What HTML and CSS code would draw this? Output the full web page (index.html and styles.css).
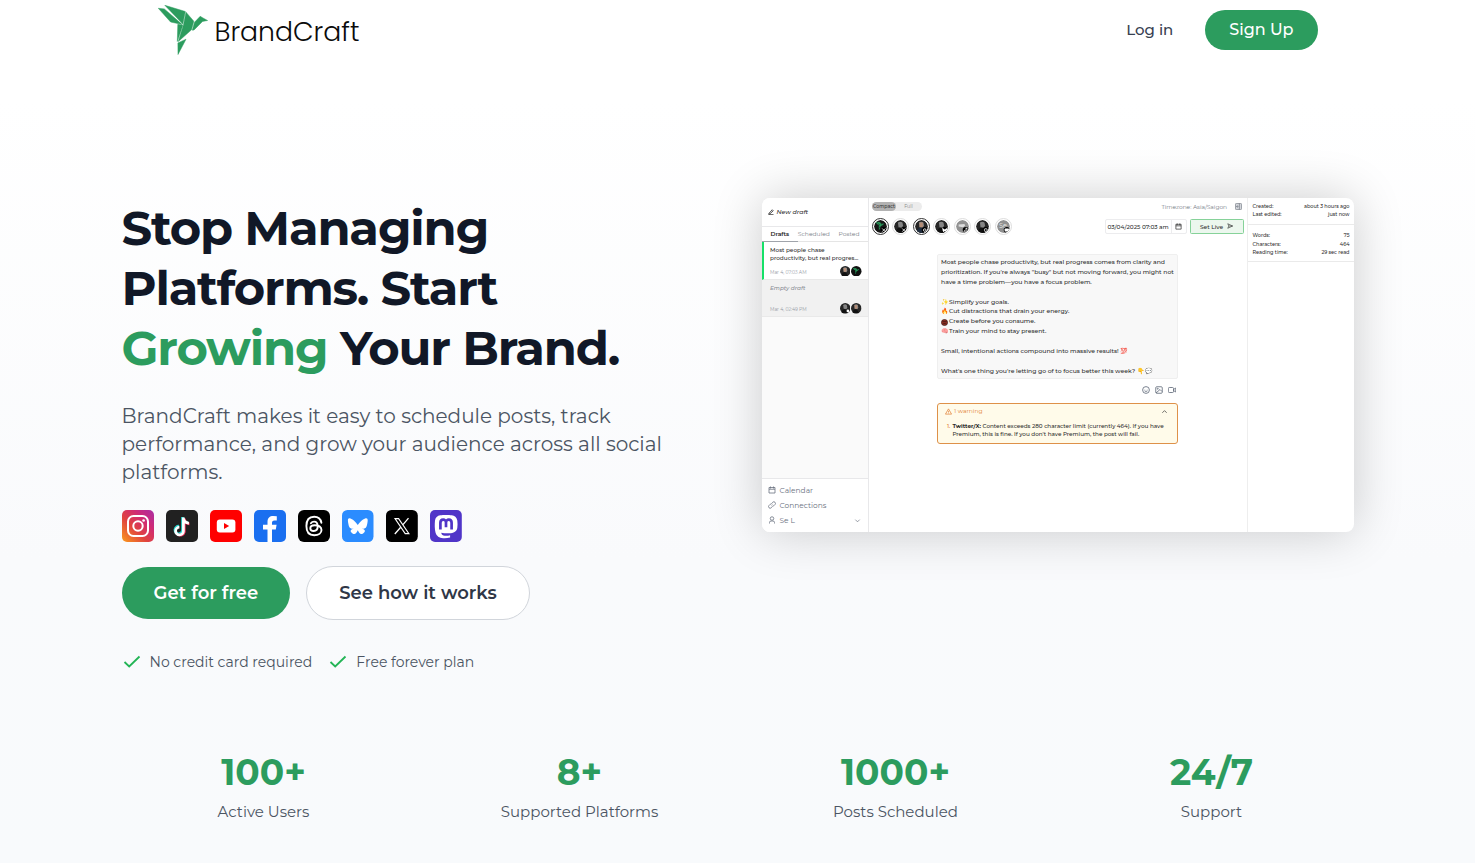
FILE: index.html
```
<!DOCTYPE html>
<html lang="en">
<head>
<meta charset="utf-8">
<title>BrandCraft</title>
<link rel="stylesheet" href="styles.css">
</head>
<body>
<svg width="0" height="0" class="defs" aria-hidden="true">
  <defs>
    <linearGradient id="ig" x1="0" y1="1" x2="1" y2="0"><stop offset="0" stop-color="#fb9a1c"/><stop offset=".4" stop-color="#e0433f"/><stop offset=".7" stop-color="#cf2a76"/><stop offset="1" stop-color="#a92fa6"/></linearGradient>
    <symbol id="bird" viewBox="0 0 50 50">
      <path fill="#2c9c5e" stroke="#2c9c5e" stroke-width=".5" stroke-linejoin="round" d="M.3 3.300 6.300 3.900 24.300 19.500 12.600 17zM6.800.3 27.300 6.500 24.800 18.900zM28 7.200 35.800 16.200 33.500 24.800 20.300 36.500 25.500 19.800zM19.800 19.300l5 1L19.300 36.500zM36.500 17.300 42.200 11.300 45 13l4.600 2.500-5.100.9-8.500 8.600-1.700.2zM19.900 37.900 28 34.200 20 49.500z"/>
    </symbol>
    <symbol id="person" viewBox="0 0 20 20"><circle cx="10" cy="10" r="10" fill="#262626"/><path d="M6 4q4-3 7 0l1 5-2 3-5-1z" fill="#858585"/><path d="M3 18q1-6 6-6l3 1 3 6q-6 3-12-1z" fill="#111"/></symbol>
  </defs>
</svg>
<header class="header">
  <a class="logo"><svg class="logo-mark"><use href="#bird"/></svg><span>BrandCraft</span></a>
  <nav class="nav"><a class="login">Log in</a><a class="signup">Sign Up</a></nav>
</header>
<main class="page">
<section class="hero">
  <div class="copy">
    <h1>Stop Managing<br>Platforms. Start<br><em>Growing</em> Your Brand.</h1>
    <p class="lead">BrandCraft makes it easy to schedule posts, track<br>performance, and grow your audience across all social<br>platforms.</p>
    <div class="socials">
      <svg viewBox="0 0 32 32"><rect width="32" height="32" rx="5" fill="url(#ig)"/><g fill="none" stroke="#fff" stroke-width="2"><rect x="6" y="6" width="20" height="20" rx="5.500"/><circle cx="16" cy="16" r="4.700"/></g><circle cx="21.600" cy="10.500" r="1.300" fill="#fff"/></svg>
      <svg viewBox="0 0 32 32"><rect width="32" height="32" rx="5" fill="#212121"/><g fill="none" stroke-width="2.700"><path stroke="#26d6cf" d="M16.500 7v13.500a3.800 3.800 0 1 1-3.600-4.300M16.500 8q1 4 5.300 4.400"/><path stroke="#f8345f" d="M18.300 8.500V22a4 4 0 0 1-6.500 2.200M18.500 9.500q1 4 5 4.400"/><path stroke="#fff" d="M17.400 7.500v13.700a3.900 3.900 0 1 1-4-4M17.400 8.500q.8 4.500 5.500 4.700"/></g></svg>
      <svg viewBox="0 0 32 32"><rect width="32" height="32" rx="5" fill="#f00"/><rect x="6.800" y="9.500" width="18.600" height="13" rx="3" fill="#fff"/><path d="m14 13 5.200 3-5.200 3z" fill="#f00"/></svg>
      <svg viewBox="0 0 32 32"><rect width="32" height="32" rx="5" fill="#1a6ff0"/><path fill="#fff" d="M13.500 32V19.500H9v-4.700h4.500v-3c0-4 2.300-5.800 5.700-5.800q2 0 3.600.3v4.200h-2.300c-2 0-2.500 1-2.500 2.300v2h4.600l-.8 4.700H18V32z"/></svg>
      <svg viewBox="0 0 32 32"><rect width="32" height="32" rx="6" fill="#000"/><path fill="none" stroke="#fff" stroke-width="1.900" stroke-linecap="round" d="M23.400 12.700C22.600 8.600 20 6.700 16.200 6.700c-5.200 0-7.800 3.500-7.800 9.300s2.600 9.300 7.800 9.300c4.500 0 7.300-2.400 7.300-5.300 0-3.300-3-4.800-6.800-4.800-2.900 0-4.400 1.200-4.400 3 0 1.700 1.500 2.800 3.400 2.800 2.600 0 4-1.700 4-4.700 0-3.200-1.200-4.700-3.600-4.700-1.500 0-2.500.6-3.200 1.600"/></svg>
      <svg viewBox="0 0 32 32"><rect width="31.500" height="32" rx="5.500" fill="#2b8cff"/><path fill="#fff" d="M15.800 15C14.500 12.500 11 9.300 8.500 8.400 6.700 7.800 5.900 8.500 5.900 10.500c0 1.500.8 5.400 1.300 6.300.7 1.800 2.700 2.200 4.600 2-3 .5-4 2-2.300 3.800 3.300 3.400 5.200.2 6.300-2.400 1.100 2.600 3 5.800 6.300 2.400 1.700-1.800.7-3.300-2.300-3.800 1.900.2 3.900-.2 4.600-2 .5-.9 1.300-4.800 1.300-6.300 0-2-.8-2.700-2.600-2.100-2.500.9-6 4.100-7.300 6.600z"/></svg>
      <svg viewBox="0 0 32 32"><rect width="31.800" height="32" rx="5.500" fill="#000"/><g fill="none" stroke="#fff"><path stroke-width="1.100" d="M9 8.600h3.600l10.300 15H19.200z"/><path stroke-width="1.300" d="M22.500 8.200 17 14.600M14.700 17.300 8.800 24"/></g></svg>
      <svg viewBox="0 0 32 32"><rect width="31.800" height="32" rx="5" fill="#5035c8"/><path fill="#fff" d="M27.300 10.400c-.4-2.900-2.900-4.700-5.500-5.100-3-.5-8.600-.5-11.600 0-2.700.5-4.900 2.300-5.200 5.100-.4 3.800-.4 8.400.5 12 1 3.700 3.900 5.400 7.600 5.800 2.200.2 4.500 0 7-.7v-2.300c-2.300.6-4.800.8-6.700.2-1.300-.4-1.900-1.300-2.100-2.700 4 .9 9.200.9 12.200-.3 2.200-.9 3.500-2.200 3.800-4.500.4-2.500.3-5 0-7.500z"/><path fill="none" stroke="#5035c8" stroke-width="2.700" d="M10.400 19.500v-6.700c0-4.200 5.600-4.400 5.600 0v4.400M21.600 19.500v-6.700c0-4.200-5.600-4.400-5.600 0"/></svg>
    </div>
    <div class="actions"><a class="btn primary">Get for free</a><a class="btn outline">See how it works</a></div>
    <ul class="perks">
      <li><svg viewBox="0 0 20 20"><path d="m2.500 10 4.700 4.500L17.500 4.500"/></svg>No credit card required</li>
      <li><svg viewBox="0 0 20 20"><path d="m2.500 10 4.700 4.500L17.500 4.500"/></svg>Free forever plan</li>
    </ul>
  </div>
  <div class="app">
    <aside class="side">
      <div class="new"><svg viewBox="0 0 12 12"><path d="M2 8.500 8.500 1.500l2 2L4 9.500l-2.500.8zM1 11.300h10"/></svg>New draft</div>
      <div class="tabs"><b>Drafts</b><span>Scheduled</span><span>Posted</span></div>
      <div class="draft active"><p>Most people chase<br>productivity, but real progres...</p><div class="meta"><span>Mar 4, 07:03 AM</span><i class="mini"><svg viewBox="0 0 20 20"><use href="#person"/><path d="M7 4h5v7H7z" fill="#b58d76"/></svg><svg viewBox="0 0 20 20"><circle cx="10" cy="10" r="10" fill="#111"/><use href="#bird" x="3" y="3" width="13" height="13"/></svg></i></div></div>
      <div class="draft"><p class="empty">Empty draft</p><div class="meta"><span>Mar 4, 02:49 PM</span><i class="mini"><svg viewBox="0 0 20 20"><use href="#person"/><circle cx="15" cy="15" r="2.500" fill="#fff"/></svg><svg viewBox="0 0 20 20"><use href="#person"/><path d="M7 4h5v7H7z" fill="#b58d76"/></svg></i></div></div>
      <div class="menu">
        <div><svg viewBox="0 0 16 16"><path d="M2 3h12v11H2zM2 6.500h12M5 1v4M11 1v4"/></svg>Calendar</div>
        <div><svg viewBox="0 0 16 16"><path d="M7 9.500a3 3 0 0 0 4.500 0L14 7a3 3 0 0 0-4.500-4.500L8 4M9 6.500a3 3 0 0 0-4.500 0L2 9a3 3 0 0 0 4.500 4.500L8 12"/></svg>Connections</div>
        <div><svg viewBox="0 0 16 16"><circle cx="8" cy="5" r="3.500"/><path d="M3 15v-2q0-3 3-3h4q3 0 3 3v2"/></svg>Se L<svg class="chev" viewBox="0 0 16 16"><path d="m3 6 5 5 5-5"/></svg></div>
      </div>
    </aside>
    <section class="editor">
      <div class="bar"><div class="seg"><b>Compact</b><span>Full</span></div><span class="tz">Timezone: Asia/Saigon<svg viewBox="0 0 16 16"><rect x="1" y="1" width="14" height="14" rx="2" fill="#d3d6db"/><path d="M10 1v14M3.500 8H8M6 5.500 3.500 8 6 10.500"/></svg></span></div>
      <div class="bar two">
        <div class="accounts">
          <svg class="on" viewBox="0 0 20 20"><circle cx="10" cy="10" r="10" fill="#171717"/><use href="#bird" x="2" y="2" width="14" height="14"/><circle cx="15" cy="15.500" r="4.700"/><path class="g" d="m12.500 13 5 5m0-5-5 5"/></svg>
          <svg viewBox="0 0 20 20"><use href="#person"/><circle cx="15" cy="15.500" r="4.700"/><path class="g" d="m12.500 13 5 5m0-5-5 5"/></svg>
          <svg class="on" viewBox="0 0 20 20"><use href="#person"/><path d="M7 4h5v7H7z" fill="#b58d76"/><path d="m2 18 4-6h8l4 6-7 2z" fill="#1f2d3f"/><circle cx="15" cy="15.500" r="4.700"/><circle class="g" cx="15" cy="15.500" r="2"/></svg>
          <svg viewBox="0 0 20 20"><use href="#person"/><circle cx="15" cy="15.500" r="4.700"/><path fill="#fff" d="m15 14.500-4-2.500.8 4.500 1.200 2.500 2-2 2 2 1.200-2.500.8-4.500z"/></svg>
          <svg viewBox="0 0 20 20"><circle cx="10" cy="10" r="10" fill="#929292"/><path d="m4 7 9-1 1 3-3 2-7-1z" fill="#ddd"/><circle cx="15" cy="15.500" r="4.700"/><path class="g" d="M15.500 12v5.500a1.500 1.500 0 1 1-1.500-1.500M15.500 12.500l2.500 1.500"/></svg>
          <svg viewBox="0 0 20 20"><use href="#person"/><circle cx="15" cy="15.500" r="4.700"/><rect class="g" x="13" y="13.500" width="4" height="4" rx="1"/></svg>
          <svg viewBox="0 0 20 20"><circle cx="10" cy="10" r="10" fill="#919191"/><text x="3" y="13" font-size="10" fill="#eee">Se</text><circle cx="15" cy="15.500" r="4.700"/><rect x="11.800" y="13.200" width="6.500" height="4.600" rx="1" fill="#fff"/></svg>
        </div>
        <div class="date"><span>03/04/2025 07:03 am</span><svg viewBox="0 0 16 16"><path d="M2 3h12v11H2zM2 6.500h12M5 1v4M11 1v4"/></svg></div>
        <div class="live">Set Live<svg viewBox="0 0 16 16"><path d="m2 2 13 6-13 6 3-6zM5 8h10"/></svg></div>
      </div>
      <div class="post">Most people chase productivity, but real progress comes from clarity and<br>prioritization. If you're always "busy" but not moving forward, you might not<br>have a time problem—you have a focus problem.<br><br><i>✨</i>Simplify your goals.<br><i>🔥</i>Cut distractions that drain your energy.<br><i><svg class="ball" viewBox="0 0 16 16"><circle cx="8" cy="8" r="7" fill="#8d2f22"/><path d="M3.500 6h9M5 10.500h6"/></svg></i>Create before you consume.<br><i>🧠</i>Train your mind to stay present.<br><br>Small, intentional actions compound into massive results! 💯<br><br>What's one thing you're letting go of to focus better this week? 👇💬</div>
      <div class="tools"><svg viewBox="0 0 16 16"><circle cx="8" cy="8" r="6.800"/><path d="M5 9.500q3 3 6 0M5.500 6v.5M10.500 6v.5"/></svg><svg viewBox="0 0 16 16"><rect x="1.500" y="1.500" width="13" height="13" rx="2"/><circle cx="5.500" cy="5.500" r="1"/><path d="m2 14 8-7 4 4"/></svg><svg viewBox="0 0 16 16"><rect x="0.700" y="3" width="10.300" height="10" rx="2"/><path d="m11 7 4.500-3v8L11 9"/></svg></div>
      <div class="warn"><div class="wh"><svg viewBox="0 0 16 16"><path d="M8 2 15 14H1zM8 6.500v4M8 12v.8"/></svg>1 warning<svg class="up" viewBox="0 0 16 16"><path d="m3 11 5-5 5 5"/></svg></div><div class="wb"><i>1.</i><span><b>Twitter/X:</b> Content exceeds 280 character limit (currently 464). If you have<br>Premium, this is fine. If you don't have Premium, the post will fail.</span></div></div>
    </section>
    <aside class="info">
      <dl><dt>Created:</dt><dd>about 3 hours ago</dd><dt>Last edited:</dt><dd>just now</dd></dl>
      <dl><dt>Words:</dt><dd>75</dd><dt>Characters:</dt><dd>464</dd><dt>Reading time:</dt><dd>29 sec read</dd></dl>
    </aside>
  </div>
</section>
<section class="stats">
  <div><strong>100+</strong><span>Active Users</span></div>
  <div><strong>8+</strong><span>Supported Platforms</span></div>
  <div><strong>1000+</strong><span>Posts Scheduled</span></div>
  <div><strong>24/7</strong><span>Support</span></div>
</section>
</main>
</body>
</html>
```
FILE: styles.css
```
*{box-sizing:border-box}
body{margin:0;height:863px;overflow:hidden;font-family:Montserrat,Inter,sans-serif;color:#111827;background:linear-gradient(#fff 0,#fff 100px,#f9fafc 560px,#f8fafc 863px)}
h1,p,ul,dl,dd{margin:0;padding:0}
.defs{position:absolute}
.header{height:60px;width:1160px;margin:0 auto;display:flex;align-items:center;justify-content:space-between}
.logo{display:flex;align-items:center;gap:7px;font:300 26.700px/40px Poppins,Inter,sans-serif;color:#0b0b0b}
.logo span{padding-top:4px}
.logo-mark{width:50px;height:50px}
.nav{display:flex;align-items:center;gap:32px}
.login{font-size:15px;line-height:20px;padding-bottom:1px;font-weight:500;color:#374151}
.signup{height:40px;line-height:40px;padding:0 24px;border-radius:20px;background:#2c9c5e;color:#fff;font-size:16px;font-weight:500}
.page{width:1232px;margin:0 auto;padding-top:138px}
.hero{display:grid;grid-template-columns:592px 592px;column-gap:48px;align-items:start}
.copy{white-space:nowrap}
h1{font-size:48px;line-height:60px;font-weight:700;letter-spacing:-.025em}
h1 em{font-style:normal;color:#2c9c5e}
.lead{margin-top:24px;font-size:20px;line-height:28px;color:#4b5563}
.socials{display:flex;gap:12px;margin-top:24px}
.socials svg{width:32px;height:32px}
.actions{display:flex;align-items:center;gap:16px;margin-top:24px}
.btn{height:52px;line-height:52px;padding:0 32px;border-radius:27px;font-size:18px;font-weight:600}
.primary{background:#2c9c5e;color:#fff}
.outline{height:54px;border:1px solid #d1d5db;background:#fff;color:#2f3747}
.perks{display:flex;gap:16px;margin-top:32px;list-style:none;font-size:14px;line-height:20px;color:#4b5563}
.perks li{display:flex;gap:8px}
.perks svg{width:20px;height:20px;fill:none;stroke:#22b455;stroke-width:1.800}
.stats{display:grid;grid-template-columns:repeat(4,1fr);column-gap:32px;margin-top:80px;text-align:center}
.stats div{display:flex;flex-direction:column;gap:8px}
.stats strong{font-size:36px;line-height:40px;color:#2c9c5e}
.stats span{font-size:15px;line-height:24px;color:#4b5563}

.app{height:334px;border-radius:8px;background:#fff;box-shadow:0 0 50px rgba(0,0,0,.2);display:grid;grid-template-columns:107px 378px 107px;white-space:nowrap;font-size:6px;color:#2c2c2c}
.app svg{fill:none;stroke:currentColor;stroke-width:1.600;flex:none}
.side{display:flex;flex-direction:column;background:#fafafa;border-right:1px solid #e8e8ea;border-radius:8px 0 0 8px;overflow:hidden}
.new{height:29px;background:#fff;border-bottom:1px solid #e8e8ea;padding-left:6px;display:flex;align-items:center;gap:3px;font-size:6.200px;font-weight:500;font-style:italic}
.new svg{width:6px;height:6px}
.tabs{height:15px;background:#fff;border-bottom:1px solid #e5e5e5;display:flex;justify-content:space-between;padding:0 8px 0 9px;line-height:14px;font-size:6px;color:#777d87}
.tabs b{font-weight:600;color:#222;margin-left:-9px;padding-left:9px;padding-right:9px;margin-right:-9px;height:15px;border-bottom:1px solid #a0a4ab}
.draft{height:37.500px;padding:4px 6px 0 8.500px;background:#f1f1f1;border-bottom:1px solid #e9e9e9;display:flex;flex-direction:column;font-size:5.750px;line-height:8px;font-weight:500}
.active{background:#fff;border-left:2px solid #16e068;padding-left:6.500px}
.empty{font-style:italic;color:#8a8e96}
.meta{margin-top:auto;display:flex;justify-content:space-between;align-items:center;font-size:4.600px;font-weight:400;color:#9298a3;padding-bottom:2px}
.meta span{padding-top:3px}
.mini{display:flex;gap:1px}
.mini svg{width:10.500px;height:10.500px;stroke:none}
.menu{margin-top:auto;height:54px;background:#fff;border-top:1px solid #e8e8ea;padding:3.500px 7px 0 6px;font-size:7.450px;line-height:15px;color:#6b7280}
.menu div{display:flex;align-items:center;height:15px;gap:4px}
.menu svg{width:8px;height:8px}
.menu .chev{margin-left:auto;width:7px;height:7px}
.editor{display:flex;flex-direction:column;padding:3px 3px 0}
.bar{height:11px;display:flex;align-items:center;justify-content:space-between}
.seg{display:flex;width:50px;height:9.500px;border-radius:5px;background:#ececec;font-size:4.700px;line-height:9.500px;text-align:center;color:#888;padding:.5px}
.seg b{width:24px;border-radius:5px;background:#b2b2b2;font-weight:500;color:#333}
.seg span{flex:1}
.tz{display:flex;align-items:center;gap:8px;color:#777d87;font-size:5.850px;line-height:10px;padding-right:1.500px}
.tz svg{width:7px;height:7px}
.two{height:20px;margin-top:4px}
.accounts{display:flex;gap:3.600px;margin-right:auto}
.app .accounts svg{width:17px;height:17px;padding:1px;border:1px solid #ddd;border-radius:50%;stroke:none}
.app .accounts .on{border-color:#333}
.accounts circle:not([fill]):not(.g){fill:#000}
.accounts .g{stroke:#fff;stroke-width:1.300;fill:none}
.date{width:82px;height:15px;border:1px solid #ececee;border-radius:2px;display:flex;align-items:center;font-weight:500;margin-right:3px;justify-content:space-between;padding:0 4px 0 2px}
.date span{border-right:1px solid #ececee;line-height:13px;padding-right:2px;font-size:5.800px}
.date svg{width:7px;height:7px}
.live{width:54px;height:15px;border:1px solid #86d299;border-radius:1.500px;background:#ecf7ee;display:flex;align-items:center;justify-content:center;gap:4px;font-size:5.900px;font-weight:500}
.live svg{width:6px;height:6px}
.post{width:241px;height:125px;margin:18px auto 0;border:1px solid #efefef;border-radius:2px;background:#f8f8f8;padding:3px;font-size:6.080px;line-height:9.880px;font-weight:500}
.post i{display:inline-block;width:8px;height:9px;line-height:9px;font-style:normal;vertical-align:top}
.post .ball{display:block;width:7px;height:7px;margin-top:1.500px;stroke:#3a1512}
.tools{width:241px;margin:6.500px auto 0;display:flex;justify-content:flex-end;gap:5px;padding-right:2px;color:#5b6575}
.tools svg{width:8px;height:8px}
.warn{width:241px;height:41px;margin:9.500px auto 0;border:1px solid #de9149;border-radius:3px;background:#fffbea;padding:3px 8px 0 7px}
.wh{display:flex;align-items:center;gap:2px;height:8px;color:#df7c32;font-size:6px}
.wh svg{width:7px;height:7px}
.wh .up{margin-left:auto;margin-right:1px;color:#333}
.wb{display:flex;gap:2px;margin-top:7px;padding-left:2px;font-size:5.660px;line-height:8px;font-weight:500}
.wb i{font-style:normal;color:#df7c32}
.info{border-left:1px solid #eee;font-size:4.950px;line-height:8.200px;font-weight:500}
.info dl{display:grid;grid-template-columns:auto auto;justify-content:space-between;padding:4px 4px 6px 5px;border-bottom:1px solid #eaeaea}
.info dl+dl{padding-top:6px;padding-bottom:5px}
.info dd{text-align:right}
```
